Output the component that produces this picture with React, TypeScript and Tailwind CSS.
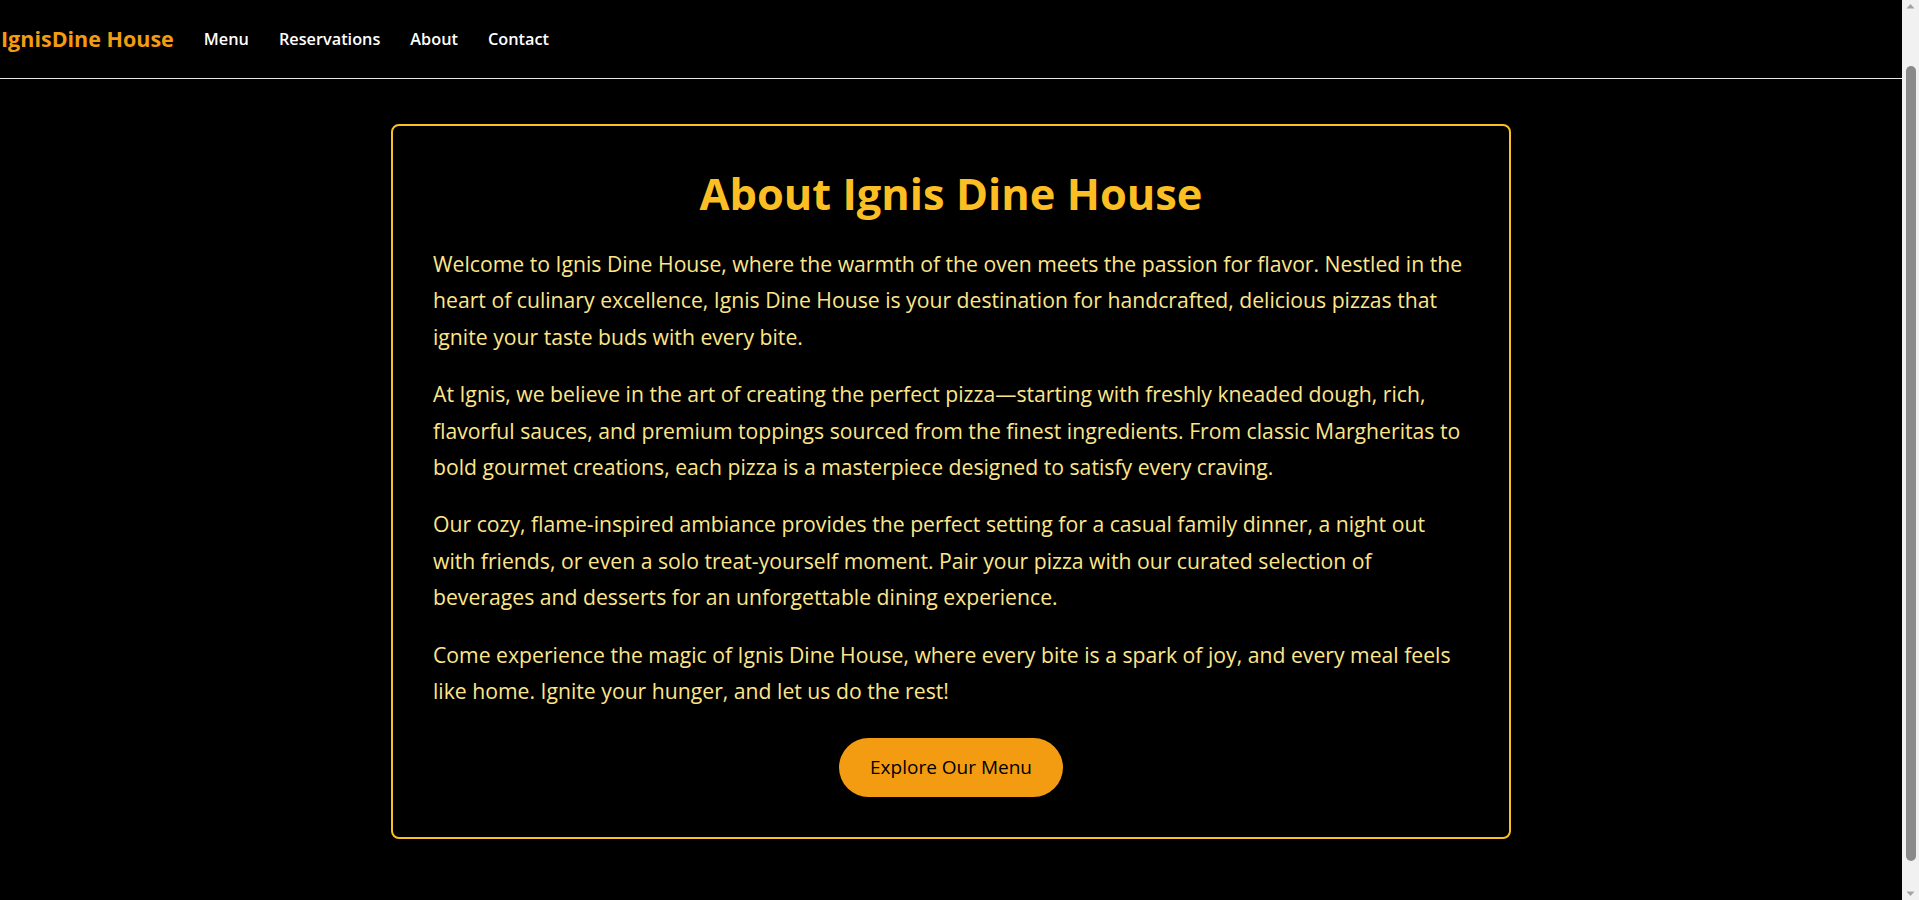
const navLinks = ["Menu", "Reservations", "About", "Contact"];

const paragraphs = [
  "Welcome to Ignis Dine House, where the warmth of the oven meets the passion for flavor. Nestled in the heart of culinary excellence, Ignis Dine House is your destination for handcrafted, delicious pizzas that ignite your taste buds with every bite.",
  "At Ignis, we believe in the art of creating the perfect pizza—starting with freshly kneaded dough, rich, flavorful sauces, and premium toppings sourced from the finest ingredients. From classic Margheritas to bold gourmet creations, each pizza is a masterpiece designed to satisfy every craving.",
  "Our cozy, flame-inspired ambiance provides the perfect setting for a casual family dinner, a night out with friends, or even a solo treat-yourself moment. Pair your pizza with our curated selection of beverages and desserts for an unforgettable dining experience.",
  "Come experience the magic of Ignis Dine House, where every bite is a spark of joy, and every meal feels like home. Ignite your hunger, and let us do the rest!",
];

const Navbar = () => {
  return (
    <nav className="h-[79px] border-b border-[#e5e5e5] flex items-center gap-[30px]">
      <a href="#" className="text-[21.5px] font-bold text-[#f39c12] pl-[1px]">
        IgnisDine House
      </a>
      <ul className="flex items-center gap-[30px]">
        {navLinks.map((link) => (
          <li key={link}>
            <a href="#" className="text-[16.3px] font-semibold text-white">
              {link}
            </a>
          </li>
        ))}
      </ul>
    </nav>
  );
};

const About = () => {
  return (
    <section className="w-[1120px] mx-auto border-2 border-[#fbbf24] rounded-lg p-10">
      <h1 className="text-[43.4px] leading-[55px] font-bold text-[#fbbf24] text-center mb-[25px]">
        About Ignis Dine House
      </h1>
      {paragraphs.map((text, i) => (
        <p key={i} className="text-[21.2px] leading-[36.4px] text-[#fde68a] mb-[21px]">
          {text}
        </p>
      ))}
      <div className="flex justify-center mt-[29px]">
        <button className="bg-[#f39c12] text-black text-[19px] leading-[27px] px-[31px] py-4 rounded-full">
          Explore Our Menu
        </button>
      </div>
    </section>
  );
};

const Scrollbar = () => {
  return (
    <aside className="w-[17px] bg-[#f1f1f1] flex flex-col items-center">
      <svg width="9" height="17" viewBox="0 0 9 17" className="shrink-0">
        <path d="M0.5 8.5 L4.5 4 L8.5 8.5 Z" fill="#a3a3a3" />
      </svg>
      <div className="mt-[49px] w-[10px] h-[795px] rounded-full bg-[#8a8a8a]" />
      <div className="flex-1" />
      <svg width="9" height="17" viewBox="0 0 9 17" className="shrink-0">
        <path d="M0.5 8.5 L4.5 13 L8.5 8.5 Z" fill="#a3a3a3" />
      </svg>
    </aside>
  );
};

export default function App() {
  return (
    <div className="h-screen flex font-['Open_Sans',sans-serif]">
      <div className="flex-1 bg-black">
        <Navbar />
        <main className="pt-[45px]">
          <About />
        </main>
      </div>
      <Scrollbar />
    </div>
  );
}
